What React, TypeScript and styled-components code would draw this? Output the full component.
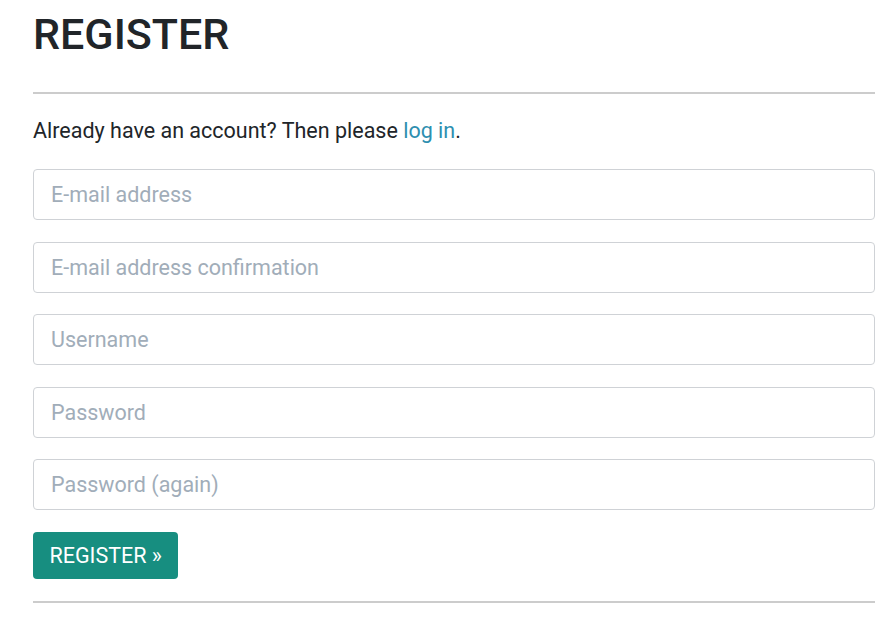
import React from "react";
import styled, { createGlobalStyle } from "styled-components";

const Global = createGlobalStyle`
  html, body { margin: 0; padding: 0; background: #fff; }
  body { font-family: Roboto, "Noto Sans", sans-serif; color: #212529; }
  * { box-sizing: border-box; }
`;

const Page = styled.div`
  padding: 0 21px 0 33px;
  width: 896px;
`;

const Title = styled.h1`
  margin: 0;
  padding-top: 10px;
  font-size: 43px;
  font-weight: 500;
  line-height: 48px;
  color: #212529;
`;

const Rule = styled.hr<{ $top: number; $bottom: number }>`
  border: 0;
  border-top: 2px solid #cccccc;
  margin: ${(p) => p.$top}px 0 ${(p) => p.$bottom}px;
`;

const Intro = styled.p`
  margin: 0 0 23px;
  font-size: 21.5px;
  line-height: 30px;
`;

const Link = styled.a`
  color: #2e8fb0;
  text-decoration: none;
`;

const Form = styled.form`
  display: flex;
  flex-direction: column;
  gap: 21.5px;
`;

const Input = styled.input`
  display: block;
  width: 100%;
  height: 51px;
  padding: 0 17px;
  font-family: Roboto, "Noto Sans", sans-serif;
  font-size: 21.5px;
  color: #495057;
  border: 1px solid #cfd2d6;
  border-radius: 4px;
  background: #fff;
  outline: none;
  &::placeholder { color: #a1adb9; }
`;

const Button = styled.button`
  align-self: flex-start;
  height: 47px;
  padding: 0 16.5px;
  background: #178e80;
  color: #fff;
  border: 0;
  border-radius: 4px;
  font-family: Roboto, "Noto Sans", sans-serif;
  font-size: 21.5px;
  cursor: pointer;
`;

export default function App() {
  return (
    <>
      <Global />
      <Page>
        <Title>REGISTER</Title>
        <Rule $top={34} $bottom={22} />
        <Intro>
          Already have an account? Then please <Link href="#">log in</Link>.
        </Intro>
        <Form onSubmit={(e) => e.preventDefault()}>
          <Input type="email" placeholder="E-mail address" />
          <Input type="email" placeholder="E-mail address confirmation" />
          <Input type="text" placeholder="Username" />
          <Input type="password" placeholder="Password" />
          <Input type="password" placeholder="Password (again)" />
          <Button type="submit">REGISTER »</Button>
        </Form>
        <Rule $top={22} $bottom={0} />
      </Page>
    </>
  );
}
